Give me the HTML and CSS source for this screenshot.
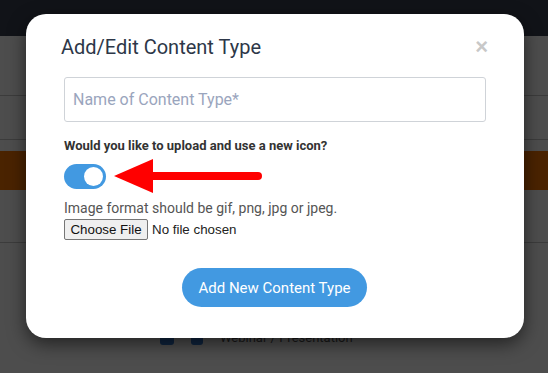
FILE: index.html
```html
<!DOCTYPE html>
<html lang="en">
<head>
    <meta charset="UTF-8">
    <title>Add/Edit Content Type</title>
    <link rel="stylesheet" href="styles.css">
</head>
<body>
    <div class="topbar"></div>
    <div class="page">
        <div class="row r1"></div>
        <div class="row r2"></div>
        <div class="row accent"></div>
        <div class="row r3"></div>
        <div class="row r4">
            <span class="sq"></span><span class="sq tall"></span>
            <span class="item">Webinar / Presentation</span>
        </div>
    </div>

    <div class="modal">
        <div class="modal-head">
            <h4>Add/Edit Content Type</h4>
            <span class="close">&times;</span>
        </div>
        <input type="text" class="name" placeholder="Name of Content Type*">
        <label class="question">Would you like to upload and use a new icon?</label>
        <div class="toggle-row">
            <span class="toggle"><span class="knob"></span></span>
            <svg class="arrow" width="150" height="36" viewBox="0 0 150 36">
                <polygon points="0,18 39,1 39,35" fill="#ff0000"/>
                <line x1="36" y1="18" x2="144" y2="18" stroke="#ff0000" stroke-width="8" stroke-linecap="round"/>
            </svg>
        </div>
        <p class="hint">Image format should be gif, png, jpg or jpeg.</p>
        <div class="file">
            <span class="file-btn">Choose File</span>
            <span class="file-name">No file chosen</span>
        </div>
        <div class="actions">
            <button type="button" class="add">Add New Content Type</button>
        </div>
    </div>
</body>
</html>
```

FILE: styles.css
```css
body {
    margin: 0;
    background-color: #4d4d4d;
    font-family: Roboto, "Liberation Sans", sans-serif;
    height: 373px;
    overflow: hidden;
    position: relative;
}

.topbar {
    height: 36px;
    background-color: #111318;
}

.page .row {
    border-bottom: 1px solid #3c3c3c;
}
.page .r1 { height: 59px; }
.page .r2 { height: 43px; }
.page .accent {
    height: 39px;
    background-color: #4a2300;
    border-bottom: none;
    margin-top: 11px;
}
.page .r3 { height: 52px; }
.page .r4 {
    height: 102px;
    border-bottom: none;
    display: flex;
    align-items: flex-end;
    padding-left: 160px;
    gap: 17px;
}
.page .sq {
    width: 14px;
    height: 14px;
    background-color: #0f2540;
    border-radius: 3px;
}
.page .sq.tall {
    width: 12px;
    height: 16px;
}
.page .item {
    color: #1a1a1a;
    font-size: 13px;
    line-height: 13px;
    margin-bottom: 1px;
}

/* modal over the page */
.modal {
    position: absolute;
    left: 26px;
    top: 14px;
    width: 498px;
    height: 324px;
    box-sizing: border-box;
    background-color: #fff;
    border-radius: 20px;
    box-shadow: 0 6px 18px rgba(0, 0, 0, 0.55);
    padding: 19px 38px 0 38px;
}

.modal-head {
    display: flex;
    justify-content: space-between;
    align-items: center;
    height: 28px;
}
.modal-head h4 {
    margin: 0;
    font-size: 20px;
    font-weight: 400;
    color: #2d3748;
    position: relative;
    left: -3px;
}
.modal-head .close {
    font-size: 22px;
    font-weight: 700;
    color: #c8c8c8;
    margin-right: -2px;
    font-family: "Liberation Sans", sans-serif;
}

.name {
    display: block;
    box-sizing: border-box;
    width: 422px;
    height: 45px;
    margin-top: 16px;
    border: 1px solid #cfd3d8;
    border-radius: 3px;
    padding: 0 8px;
    font-family: Roboto, "Liberation Sans", sans-serif;
    font-size: 16px;
    outline: none;
}
.name::placeholder {
    color: #9aa5bd;
}

.question {
    display: block;
    margin-top: 16px;
    font-size: 13px;
    font-weight: 700;
    color: #333;
}

.toggle-row {
    display: flex;
    align-items: center;
    margin-top: 5px;
    height: 36px;
}
.toggle {
    width: 42px;
    height: 25px;
    border-radius: 13px;
    background-color: #4299e1;
    position: relative;
    flex: none;
}
.toggle .knob {
    position: absolute;
    right: 3px;
    top: 3px;
    width: 19px;
    height: 19px;
    border-radius: 50%;
    background-color: #fff;
}
.arrow {
    margin-left: 8px;
    flex: none;
}

.hint {
    margin: 6px 0 0 0;
    font-size: 14px;
    color: #555;
    line-height: 17px;
}

.file {
    display: flex;
    align-items: center;
    margin-top: 2px;
    font-size: 13.33px;
    font-family: "Liberation Sans", Arial, sans-serif;
}
.file-btn {
    box-sizing: border-box;
    height: 21px;
    width: 84px;
    text-align: center;
    border: 1px solid #767676;
    border-radius: 2px;
    background-color: #efefef;
    color: #111;
    line-height: 19px;
}
.file-name {
    margin-left: 4px;
    color: #222;
}

.actions {
    display: flex;
    justify-content: center;
    margin-top: 28px;
}
.add {
    height: 39px;
    padding: 0 16px;
    border: none;
    border-radius: 20px;
    background-color: #4299e1;
    color: #fff;
    font-family: Roboto, "Liberation Sans", sans-serif;
    font-size: 15px;
    margin-right: 1px;
}
```
